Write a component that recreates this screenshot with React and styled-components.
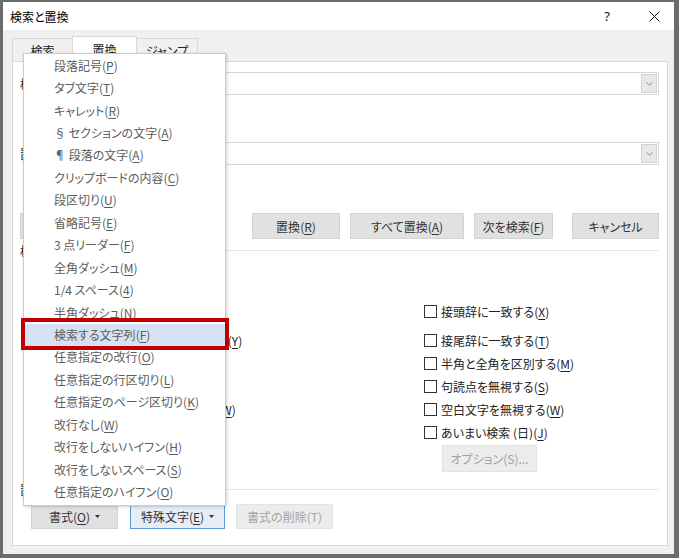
import React from "react";
import styled, { createGlobalStyle } from "styled-components";

const GlobalStyle = createGlobalStyle`
  html, body { margin: 0; padding: 0; background: #fff; }
  body {
    font-family: "Noto Sans CJK JP", "Noto Sans", sans-serif;
    font-size: 12px;
    color: #222;
    font-feature-settings: "palt";
  }
  * { box-sizing: border-box; }
  u { text-underline-offset: 2px; }
`;

const Window = styled.div`
  position: relative;
  width: 679px;
  height: 558px;
  border-style: solid;
  border-color: #6c6c6c;
  border-width: 2px 5px 4px 3px;
  background: #f0f0f0;
  display: flex;
  flex-direction: column;
`;

const TitleBar = styled.div`
  height: 28px;
  background: #fff;
  display: flex;
  align-items: center;
  padding-left: 7px;
`;

const TitleText = styled.div`
  flex: 1;
  color: #000;
  font-size: 12px;
`;

const TitleButton = styled.div`
  width: ${(p) => p.$w}px;
  height: 28px;
  display: flex;
  align-items: center;
  justify-content: center;
  color: #111;
  font-family: "Noto Sans", sans-serif;
  font-size: 13px;
`;

const Body = styled.div`
  flex: 1;
  display: flex;
  flex-direction: column;
  padding: 6px 6px 8px 9px;
  min-height: 0;
`;

const TabStrip = styled.div`
  height: 25px;
  display: flex;
  align-items: flex-end;
`;

const Tab = styled.div`
  position: relative;
  z-index: ${(p) => (p.$active ? 2 : 1)};
  width: ${(p) => p.$w}px;
  height: ${(p) => (p.$active ? 26 : 23)}px;
  margin-bottom: ${(p) => (p.$active ? -1 : 0)}px;
  margin-right: -1px;
  display: flex;
  align-items: center;
  justify-content: center;
  border: 1px solid #d9d9d9;
  border-bottom: none;
  background: ${(p) => (p.$active ? "#fff" : "#f0f0f0")};
  color: #222;
`;

const Panel = styled.div`
  flex: 1;
  background: #fff;
  border: 1px solid #d9d9d9;
  padding: 10px 8px 0 7px;
  display: flex;
  flex-direction: column;
`;

const FieldRow = styled.div`
  display: flex;
  align-items: center;
  height: 23px;
  margin-top: ${(p) => p.$mt || 0}px;
`;

const FieldLabel = styled.div`
  width: ${(p) => p.$w || 100}px;
  flex: none;
  white-space: nowrap;
  color: #222;
`;

const Combo = styled.div`
  flex: ${(p) => (p.$w ? "none" : 1)};
  width: ${(p) => (p.$w ? `${p.$w}px` : "auto")};
  height: 23px;
  border: 1px solid #d6d6d6;
  background: #fff;
  padding: 1px;
  display: flex;
  align-items: stretch;
`;

const ComboValue = styled.div`
  flex: 1;
  padding-left: 4px;
  display: flex;
  align-items: center;
  color: #222;
`;

const ComboArrow = styled.div`
  width: 16px;
  background: #e8e8e8;
  border: 1px solid #d2d2d2;
  display: flex;
  align-items: center;
  justify-content: center;
`;

const ButtonRow = styled.div`
  display: flex;
  height: ${(p) => p.$h || 26}px;
  margin-top: ${(p) => p.$mt || 0}px;
`;

const Spacer = styled.div`
  flex: 1;
`;

const Button = styled.div`
  width: ${(p) => p.$w}px;
  margin-left: ${(p) => p.$ml || 0}px;
  display: flex;
  align-items: center;
  justify-content: center;
  background: ${(p) =>
    p.$disabled ? "#ececec" : p.$focus ? "#e6edf5" : "#e1e1e1"};
  border: 1px solid
    ${(p) => (p.$disabled ? "#e2e2e2" : p.$focus ? "#5f9bd6" : "#d3d3d3")};
  color: ${(p) => (p.$disabled ? "#a2a2a2" : "#333")};
  white-space: nowrap;
`;

const Caret = styled.svg`
  margin-left: 5px;
  flex: none;
`;

const SectionHeader = styled.div`
  display: flex;
  align-items: center;
  height: 14px;
  margin-top: ${(p) => p.$mt || 0}px;
  color: #222;
`;

const SectionLine = styled.div`
  flex: 1;
  height: 1px;
  background: #e6e6e6;
  margin-left: 6px;
`;

const OptionsGrid = styled.div`
  display: grid;
  grid-template-columns: 404px 1fr;
  margin-top: 14px;
`;

const OptionColumn = styled.div`
  display: flex;
  flex-direction: column;
  padding-left: ${(p) => p.$indent || 0}px;
`;

const ColumnSpacer = styled.div`
  height: 23px;
`;

const CheckRow = styled.div`
  display: flex;
  align-items: center;
  height: 23px;
  margin-top: ${(p) => p.$mt || 0}px;
  white-space: nowrap;
`;

const CheckBox = styled.span`
  width: 13px;
  height: 13px;
  flex: none;
  border: 1px solid #333;
  background: #fff;
  margin-right: 4px;
`;

const OptionButtonRow = styled.div`
  display: flex;
  height: 27px;
  margin-top: 1px;
  padding-left: 18px;
`;

const Menu = styled.div`
  position: absolute;
  left: 20px;
  top: 51px;
  width: 203px;
  z-index: 5;
  background: #fff;
  border: 1px solid #cbcbcb;
  padding: 1px 0;
  box-shadow: 1px 1px 3px rgba(0, 0, 0, 0.18);
`;

const MenuItem = styled.div`
  height: 22.45px;
  padding: 0 0 2px 30px;
  display: flex;
  align-items: center;
  color: #5c5c5c;
  background: ${(p) => (p.$active ? "#d6e2f3" : "transparent")};
  white-space: nowrap;
`;

const Highlight = styled.div`
  position: absolute;
  left: 18px;
  top: 316px;
  width: 208px;
  height: 32px;
  border: 4px solid #c00000;
  z-index: 6;
`;

const Mn = ({ text, k }) => (
  <>
    {text}(<u>{k}</u>)
  </>
);

const menuItems = [
  ["段落記号", "P"],
  ["タブ文字", "T"],
  ["キャレット", "R"],
  ["§ セクションの文字", "A"],
  ["¶ 段落の文字", "A"],
  ["クリップボードの内容", "C"],
  ["段区切り", "U"],
  ["省略記号", "E"],
  ["3 点リーダー", "F"],
  ["全角ダッシュ", "M"],
  ["1/4 スペース", "4"],
  ["半角ダッシュ", "N"],
  ["検索する文字列", "F"],
  ["任意指定の改行", "O"],
  ["任意指定の行区切り", "L"],
  ["任意指定のページ区切り", "K"],
  ["改行なし", "W"],
  ["改行をしないハイフン", "H"],
  ["改行をしないスペース", "S"],
  ["任意指定のハイフン", "O"],
];

const leftOptions = [
  ["大文字と小文字を区別する", "H"],
  ["完全に一致する単語だけを検索する", "Y"],
  ["ワイルドカードを使用する", "U"],
  ["あいまい検索 (英)", "K"],
  ["英単語の異なる活用形も検索する", "W"],
];

const rightOptions = [
  ["接頭辞に一致する", "X"],
  ["接尾辞に一致する", "T"],
  ["半角と全角を区別する", "M"],
  ["句読点を無視する", "S"],
  ["空白文字を無視する", "W"],
  ["あいまい検索 (日)", "J"],
];

const Chevron = () => (
  <svg width="7" height="4" viewBox="0 0 7 4">
    <path d="M0.5 0.5 L3.5 3.2 L6.5 0.5" fill="none" stroke="#8a8a8a" strokeWidth="1" />
  </svg>
);

const SmallCaret = () => (
  <Caret width="5" height="3" viewBox="0 0 5 3">
    <path d="M0 0 H5 L2.5 3 Z" fill="#333" />
  </Caret>
);

export default function App() {
  return (
    <>
      <GlobalStyle />
      <Window>
        <TitleBar>
          <TitleText>検索と置換</TitleText>
          <TitleButton $w={54}>?</TitleButton>
          <TitleButton $w={40}>
            <svg width="11" height="11" viewBox="0 0 11 11">
              <path d="M0.5 0.5 L10.5 10.5 M10.5 0.5 L0.5 10.5" stroke="#111" strokeWidth="1" />
            </svg>
          </TitleButton>
        </TitleBar>
        <Body>
          <TabStrip>
            <Tab $w={61}>検索</Tab>
            <Tab $w={65} $active>置換</Tab>
            <Tab $w={62}>ジャンプ</Tab>
          </TabStrip>
          <Panel>
            <FieldRow>
              <FieldLabel>
                <Mn text="検索する文字列" k="N" />:
              </FieldLabel>
              <Combo>
                <ComboValue />
                <ComboArrow>
                  <Chevron />
                </ComboArrow>
              </Combo>
            </FieldRow>
            <FieldRow $mt={47}>
              <FieldLabel>
                <Mn text="置換後の文字列" k="I" />:
              </FieldLabel>
              <Combo>
                <ComboValue />
                <ComboArrow>
                  <Chevron />
                </ComboArrow>
              </Combo>
            </FieldRow>
            <ButtonRow $mt={48}>
              <Button $w={90}>
                &lt;&lt; <Mn text="オプション" k="L" />
              </Button>
              <Spacer />
              <Button $w={88}>
                <Mn text="置換" k="R" />
              </Button>
              <Button $w={114} $ml={10}>
                <Mn text="すべて置換" k="A" />
              </Button>
              <Button $w={79} $ml={10}>
                <Mn text="次を検索" k="F" />
              </Button>
              <Button $w={87} $ml={19}>
                キャンセル
              </Button>
            </ButtonRow>
            <SectionHeader $mt={4}>
              検索オプション
              <SectionLine />
            </SectionHeader>
            <OptionsGrid>
              <OptionColumn $indent={5}>
                <FieldRow>
                  <FieldLabel $w={70}>
                    検索方向(<u>:</u>)
                  </FieldLabel>
                  <Combo $w={90}>
                    <ComboValue>文書全体</ComboValue>
                    <ComboArrow>
                      <Chevron />
                    </ComboArrow>
                  </Combo>
                </FieldRow>
                {leftOptions.map(([t, k], i) => (
                  <CheckRow key={t} $mt={i < 2 ? 6 : 0}>
                    <CheckBox />
                    <Mn text={t} k={k} />
                  </CheckRow>
                ))}
              </OptionColumn>
              <OptionColumn>
                <ColumnSpacer />
                {rightOptions.map(([t, k], i) => (
                  <CheckRow key={t} $mt={i < 2 ? 6 : 0}>
                    <CheckBox />
                    <Mn text={t} k={k} />
                  </CheckRow>
                ))}
                <OptionButtonRow>
                  <Button $w={95} $disabled>
                    オプション(S)...
                  </Button>
                </OptionButtonRow>
              </OptionColumn>
            </OptionsGrid>
            <SectionHeader $mt={10}>
              置換
              <SectionLine />
            </SectionHeader>
            <ButtonRow $mt={8} $h={25}>
              <Button $w={87} $ml={11}>
                <Mn text="書式" k="O" />
                <SmallCaret />
              </Button>
              <Button $w={95} $ml={12} $focus>
                <Mn text="特殊文字" k="E" />
                <SmallCaret />
              </Button>
              <Button $w={97} $ml={11} $disabled>
                書式の削除(T)
              </Button>
            </ButtonRow>
          </Panel>
        </Body>
        <Menu>
          {menuItems.map(([t, k], i) => (
            <MenuItem key={i} $active={i === 12}>
              <Mn text={t} k={k} />
            </MenuItem>
          ))}
        </Menu>
        <Highlight />
      </Window>
    </>
  );
}
